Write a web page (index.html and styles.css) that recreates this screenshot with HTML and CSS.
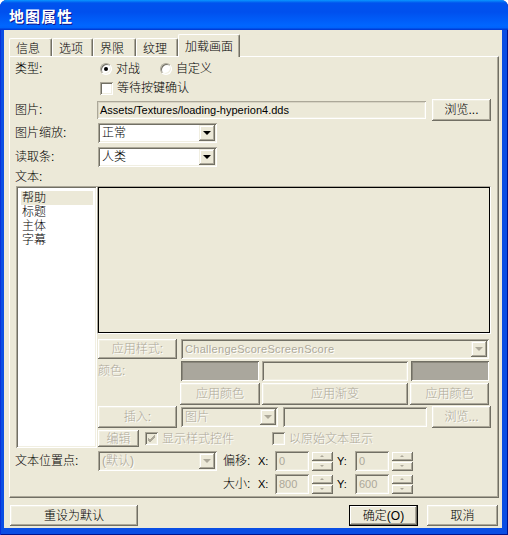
FILE: index.html
```html
<!DOCTYPE html>
<html lang="zh-CN">
<head>
  <meta charset="UTF-8">
  <title>地图属性</title>
  <link rel="stylesheet" href="styles.css">
</head>
<body>
  <div class="window">
    <div class="titlebar">地图属性</div>

    <div class="client">
      <div class="tabs">
        <div class="tab w43">信息</div>
        <div class="tab w41">选项</div>
        <div class="tab w43">界限</div>
        <div class="tab w42">纹理</div>
        <div class="tab active">加载画面</div>
      </div>

      <div class="panel">
        <div class="row r-type">
          <span class="label">类型:</span>
          <span class="radio checked"></span><span class="opt">对战</span>
          <span class="radio second"></span><span class="opt">自定义</span>
        </div>

        <div class="row r-check">
          <span class="label"></span>
          <span class="checkbox"></span><span class="opt">等待按键确认</span>
        </div>

        <div class="row r-pic">
          <span class="label">图片:</span>
          <div class="field readonly path">Assets/Textures/loading-hyperion4.dds</div>
          <button class="btn browse">浏览...</button>
        </div>

        <div class="row r-scale">
          <span class="label">图片缩放:</span>
          <div class="combo w119"><span>正常</span><i class="drop"></i></div>
        </div>

        <div class="row r-bar">
          <span class="label">读取条:</span>
          <div class="combo w119"><span>人类</span><i class="drop"></i></div>
        </div>

        <div class="row r-textlabel">
          <span class="label">文本:</span>
        </div>

        <div class="main">
          <ul class="listbox">
            <li class="sel">帮助</li>
            <li>标题</li>
            <li>主体</li>
            <li>字幕</li>
          </ul>

          <div class="editor">
            <div class="textarea"></div>

            <div class="erow e-style">
              <button class="btn off w79">应用样式:</button>
              <div class="combo off w308"><span class="latin">ChallengeScoreScreenScore</span><i class="drop"></i></div>
            </div>

            <div class="erow e-color">
              <span class="elabel off">颜色:</span>
              <div class="swatch"></div>
              <div class="field blank"></div>
              <div class="swatch"></div>
            </div>

            <div class="erow e-apply">
              <button class="btn off w80">应用颜色</button>
              <button class="btn off w146">应用渐变</button>
              <button class="btn off w79">应用颜色</button>
            </div>

            <div class="erow e-insert">
              <button class="btn off w79">插入:</button>
              <div class="combo off w97"><span>图片</span><i class="drop"></i></div>
              <div class="field blank w144"></div>
              <button class="btn off w59">浏览...</button>
            </div>

            <div class="erow e-edit">
              <button class="btn off small">编辑</button>
              <span class="checkbox off">
                <svg viewBox="0 0 9 9"><path d="M1 4 L3 6 L8 1 M1 5 L3 7 L8 2 M1 6 L3 8 L8 3" stroke="#ACA899" fill="none"/></svg>
              </span>
              <span class="opt off">显示样式控件</span>
              <span class="checkbox off second"></span>
              <span class="opt off">以原始文本显示</span>
            </div>
          </div>
        </div>

        <div class="row r-anchor">
          <span class="label">文本位置点:</span>
          <div class="combo off w119"><span>(默认)</span><i class="drop"></i></div>
          <span class="plabel">偏移:</span>
          <span class="axis">X:</span>
          <div class="field num">0</div>
          <div class="spin"><i class="up"></i><i class="down"></i></div>
          <span class="axis ay">Y:</span>
          <div class="field num">0</div>
          <div class="spin"><i class="up"></i><i class="down"></i></div>
        </div>

        <div class="row r-size">
          <span class="spacer"></span>
          <span class="plabel">大小:</span>
          <span class="axis">X:</span>
          <div class="field num">800</div>
          <div class="spin"><i class="up"></i><i class="down"></i></div>
          <span class="axis ay">Y:</span>
          <div class="field num">600</div>
          <div class="spin"><i class="up"></i><i class="down"></i></div>
        </div>
      </div>

      <div class="footer">
        <button class="btn reset">重设为默认</button>
        <button class="btn ok">确定(O)</button>
        <button class="btn cancel">取消</button>
      </div>
    </div>
  </div>
</body>
</html>
```

FILE: styles.css
```css
* {
  margin: 0;
  padding: 0;
  box-sizing: border-box;
}

body {
  font-family: "Liberation Sans", "Noto Sans CJK SC", sans-serif;
  font-size: 12px;
  font-weight: 300;
  color: #000;
  background: #fff;
}

/* Janela */
.window {
  width: 508px;
  height: 535px;
  background: #0a4ee4;
  border-radius: 7px 7px 0 0;
  padding: 0 6px 7px 4px;
  display: flex;
  flex-direction: column;
  box-shadow: inset 1px 0 #0831d9, inset -1px -1px #00138c;
}

.titlebar {
  height: 30px;
  margin: 0 -6px 0 -4px;
  padding: 8px 0 0 9px;
  border-radius: 7px 7px 0 0;
  background: linear-gradient(to bottom, #0997ff 0%, #0053ee 10%, #0050ee 40%, #0066ff 85%, #0062fa 93%, #003dd7 97%, #003dd7 100%);
  color: #fff;
  font-family: "Noto Sans CJK SC", sans-serif;
  font-weight: bold;
  font-size: 15px;
  line-height: 16px;
  letter-spacing: 1px;
  text-shadow: 1px 1px #0f1089;
}

.client {
  flex: 1;
  background: #ece9d8;
  padding: 0 4px 0 5px;
}

/* Abas */
.tabs {
  display: flex;
  align-items: flex-end;
  height: 26px;
  position: relative;
  z-index: 1;
}

.tab {
  height: 18px;
  padding: 3px 0 0 6px;
  line-height: 14px;
  background: #ece9d8;
  border-top: 1px solid #fff;
  border-left: 1px solid #fff;
  border-right: 1px solid #716f64;
  border-radius: 2px 2px 0 0;
  box-shadow: inset -1px 0 #aca899;
}

.tab.w43 { width: 43px; }
.tab.w41 { width: 41px; }
.tab.w42 { width: 42px; }

.tab.active {
  width: 62px;
  height: 23px;
  margin-bottom: -1px;
  padding-top: 5px;
  padding-left: 6px;
}

.panel {
  width: 490px;
  height: 442px;
  border: 1px solid;
  border-color: #fff #716f64 #716f64 #fff;
  box-shadow: inset -1px -1px #aca899;
  padding: 5px 0 0 5px;
}

/* Linhas */
.row {
  display: flex;
  align-items: center;
}

.label {
  width: 83px;
  flex-shrink: 0;
  line-height: 14px;
}

.r-type { height: 14px; }
.r-check { height: 14px; margin-top: 5px; }
.r-pic { height: 22px; margin-top: 4px; }
.r-scale { height: 20px; margin-top: 2px; }
.r-bar { height: 20px; margin-top: 4px; }
.r-textlabel { height: 13px; margin-top: 3px; }
.r-anchor { height: 20px; margin-top: 3px; }
.r-size { height: 20px; margin-top: 3px; }

.opt {
  line-height: 14px;
  margin-left: 4px;
}

.off {
  color: #aca899;
  text-shadow: 1px 1px #fff;
}

/* Controles */
.radio {
  width: 12px;
  height: 12px;
  margin-left: 2px;
  border-radius: 50%;
  background: #fff;
  border: 1px solid;
  border-color: #aca899 #fff #fff #aca899;
  box-shadow: inset 1px 1px #716f64, inset -1px -1px #f1efe2;
  position: relative;
  flex-shrink: 0;
}

.radio.second {
  margin-left: 20px;
}

.radio.checked::after {
  content: '';
  position: absolute;
  left: 3px;
  top: 3px;
  width: 4px;
  height: 4px;
  border-radius: 50%;
  background: #000;
}

.checkbox {
  width: 13px;
  height: 13px;
  margin-left: 2px;
  background: #fff;
  box-shadow: inset 1px 1px #aca899, inset -1px -1px #fff, inset 2px 2px #716f64, inset -2px -2px #f1efe2;
  display: flex;
  align-items: center;
  justify-content: center;
  flex-shrink: 0;
}

.checkbox.off {
  background: #ece9d8;
  margin-left: 6px;
}

.checkbox.off.second {
  margin-left: 38px;
}

.checkbox svg {
  width: 9px;
  height: 9px;
}

.field {
  height: 20px;
  background: #fff;
  box-shadow: inset 1px 1px #aca899, inset -1px -1px #fff, inset 2px 2px #716f64, inset -2px -2px #f1efe2;
  padding: 0 3px;
  line-height: 20px;
  flex-shrink: 0;
}

.field.readonly {
  background: #ece9d8;
  box-shadow: inset 1px 1px #aca899, inset -1px -1px #fff, inset 2px 2px #d8d4c4, inset -2px -2px #f1efe2;
}

.path {
  width: 329px;
  height: 18px;
  margin-left: -1px;
  line-height: 18px;
  font-size: 11px;
  padding-left: 3px;
}

.field.blank {
  background: #ece9d8;
}

.field.num {
  width: 34px;
  background: #ece9d8;
  color: #aca899;
  font-size: 11px;
  padding-left: 4px;
}

.btn {
  font: inherit;
  color: #000;
  background: #ece9d8;
  border: none;
  height: 22px;
  box-shadow: inset -1px -1px #716f64, inset 1px 1px #fff, inset -2px -2px #aca899, inset 2px 2px #f1efe2;
  line-height: 14px;
  text-align: center;
  flex-shrink: 0;
}

.btn.off {
  color: #aca899;
  text-shadow: 1px 1px #fff;
}

.browse {
  width: 59px;
  margin-left: 6px;
}

.combo {
  height: 20px;
  background: #fff;
  box-shadow: inset 1px 1px #aca899, inset -1px -1px #fff, inset 2px 2px #716f64, inset -2px -2px #f1efe2;
  display: flex;
  align-items: center;
  padding: 0 2px 0 4px;
  flex-shrink: 0;
}

.combo span {
  flex: 1;
  line-height: 14px;
}

.combo.off {
  background: #ece9d8;
}

.combo .latin {
  font-size: 11px;
  letter-spacing: 0.3px;
}

.drop {
  width: 16px;
  height: 16px;
  background: #ece9d8;
  box-shadow: inset -1px -1px #716f64, inset 1px 1px #f1efe2, inset -2px -2px #aca899, inset 2px 2px #fff;
  position: relative;
}

.drop::after {
  content: '';
  position: absolute;
  left: 4px;
  top: 6px;
  border-left: 4px solid transparent;
  border-right: 4px solid transparent;
  border-top: 4px solid #000;
}

.combo.off .drop::after {
  border-top-color: #aca899;
}

.w59 { width: 59px; }
.w79 { width: 79px; }
.w80 { width: 80px; }
.w97 { width: 97px; }
.w119 { width: 119px; }
.w144 { width: 144px; }
.w146 { width: 146px; }
.w308 { width: 308px; }

/* Área principal */
.main {
  display: flex;
  height: 262px;
  margin-top: 3px;
}

.listbox {
  list-style: none;
  width: 81px;
  margin-left: 1px;
  background: #fff;
  box-shadow: inset 1px 1px #aca899, inset -1px -1px #fff, inset 2px 2px #716f64, inset -2px -2px #f1efe2;
  padding: 5px 4px 0 5px;
}

.listbox li {
  line-height: 14px;
  padding-left: 1px;
}

.listbox li.sel {
  background: #ece9d8;
}

.editor {
  width: 394px;
  padding-left: 1px;
}

.textarea {
  height: 148px;
  margin-left: -1px;
  border: 1px solid;
  border-color: #aca899 #fff #fff #aca899;
  box-shadow: inset 0 0 0 1px #000;
  background: #ece9d8;
}

.erow {
  display: flex;
  align-items: center;
}

.e-style { height: 20px; margin-top: 5px; }
.e-style .btn { height: 20px; }
.e-style .combo { margin-left: 4px; }

.e-color { height: 20px; margin-top: 2px; gap: 3px; }
.e-color .field.blank { width: 146px; }

.elabel {
  width: 80px;
  line-height: 14px;
}

.swatch {
  width: 78px;
  height: 20px;
  background: #aaa79d;
  box-shadow: inset 1px 1px #716f64, inset -1px -1px #fff, inset 2px 2px #8a877c;
}

.e-apply {
  height: 22px;
  margin-top: 2px;
  padding-left: 82px;
  gap: 2px;
}

.e-insert { height: 22px; margin-top: 1px; }
.e-insert .combo { margin-left: 4px; }
.e-insert .field { margin-left: 5px; }
.e-insert .btn.w59 { margin-left: 5px; }

.e-edit { height: 17px; margin-top: 2px; }

.btn.small {
  width: 41px;
  height: 17px;
}

/* Posição e tamanho */
.spacer {
  width: 202px;
  flex-shrink: 0;
}

.plabel {
  width: 35px;
  margin-left: 6px;
  line-height: 14px;
  flex-shrink: 0;
}

.axis {
  width: 17px;
  font-size: 11px;
  flex-shrink: 0;
}

.axis.ay {
  width: 18px;
  margin-left: 4px;
}

.spin {
  width: 21px;
  height: 19px;
  margin-left: 3px;
  display: flex;
  flex-direction: column;
  gap: 1px;
}

.spin i {
  flex: 1;
  background: #ece9d8;
  box-shadow: inset -1px -1px #716f64, inset 1px 1px #fff, inset -2px -2px #aca899;
  position: relative;
}

.spin i::after {
  content: '';
  position: absolute;
  left: 8px;
  top: 3px;
  border-left: 2px solid transparent;
  border-right: 2px solid transparent;
}

.spin .up::after {
  border-bottom: 2px solid #aca899;
}

.spin .down::after {
  border-top: 2px solid #aca899;
}

/* Rodapé */
.footer {
  display: flex;
  align-items: center;
  margin-top: 7px;
  padding-left: 1px;
}

.footer .btn {
  height: 21px;
}

.reset {
  width: 128px;
}

.ok {
  width: 69px;
  margin-left: auto;
  box-shadow: inset 0 0 0 1px #000, inset -2px -2px #716f64, inset 2px 2px #fff, inset -3px -3px #aca899;
}

.cancel {
  width: 71px;
  margin-left: 9px;
}
```
